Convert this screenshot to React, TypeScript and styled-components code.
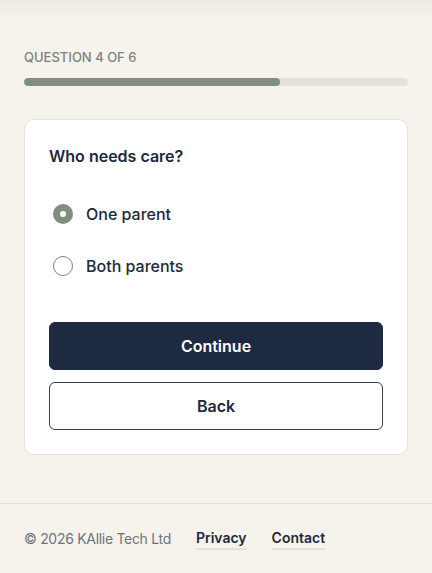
import styled, { createGlobalStyle } from "styled-components";

const GlobalStyle = createGlobalStyle`
  html, body {
    margin: 0;
    padding: 0;
  }

  body {
    background: #f6f3ed;
    font-family: "Inter", "Noto Sans", sans-serif;
    color: #1e293b;
    -webkit-font-smoothing: antialiased;
  }

  * {
    box-sizing: border-box;
  }
`;

const Page = styled.div`
  min-height: 573px;
  background: linear-gradient(to bottom, #eeeae3 0px, #f6f3ed 24px, #f6f3ed 100%);

  display: flex;
  flex-direction: column;
`;

const Main = styled.main`
  padding: 49px 24px 48px;

  display: flex;
  flex-direction: column;
`;

const StepLabel = styled.div`
  margin: 0;

  color: #7b847d;
  font-size: 13px;
  line-height: 16px;
  font-weight: 500;
  letter-spacing: 0;
  text-transform: uppercase;
`;

const Track = styled.div`
  margin-top: 13px;

  height: 8px;
  border-radius: 4px;
  background-color: #e5e2db;

  overflow: hidden;
`;

const Fill = styled.div`
  height: 100%;
  border-radius: 4px;
  background-color: #7f8e80;
`;

const Card = styled.section`
  margin-top: 33px;

  background-color: #ffffff;
  border: 1px solid #e8e4dc;
  border-radius: 10px;

  padding: 24px;

  display: flex;
  flex-direction: column;
`;

const Question = styled.h2`
  margin: 0;

  font-size: 16px;
  line-height: 24px;
  font-weight: 600;
  color: #1e293b;
`;

const Options = styled.div`
  margin-top: 22px;

  display: flex;
  flex-direction: column;
  gap: 4px;
`;

const Option = styled.label`
  height: 48px;

  display: flex;
  align-items: center;
  gap: 13px;

  padding-left: 4px;

  cursor: pointer;
`;

const Radio = styled.span<{ checked: boolean }>`
  width: 20px;
  height: 20px;
  border-radius: 50%;

  flex-shrink: 0;

  display: flex;
  justify-content: center;
  align-items: center;

  background-color: ${props => props.checked ? '#7f8e80' : '#ffffff'};
  border: ${props => props.checked ? 'none' : '1.5px solid #808080'};

  &::after {
    content: "";
    display: ${props => props.checked ? 'block' : 'none'};
    width: 6px;
    height: 6px;
    border-radius: 50%;
    background-color: #ffffff;
  }
`;

const OptionText = styled.span`
  font-size: 16px;
  line-height: 24px;
  font-weight: 500;
  color: #1e293b;
`;

const Actions = styled.div`
  margin-top: 32px;

  display: flex;
  flex-direction: column;
  gap: 12px;
`;

const Button = styled.button<{ primary?: boolean }>`
  height: 48px;
  width: 100%;

  border-radius: 6px;
  border: 1px solid ${props => props.primary ? '#1e2a40' : '#333d4d'};
  background-color: ${props => props.primary ? '#1e2a40' : '#ffffff'};
  color: ${props => props.primary ? '#ffffff' : '#1e293b'};

  font-family: inherit;
  font-size: 16px;
  font-weight: 600;

  cursor: pointer;
`;

const Footer = styled.footer`
  border-top: 1px solid #e5e1d8;

  padding: 24px 24px 24px;

  display: flex;
  align-items: center;
  gap: 25px;
`;

const Copyright = styled.span`
  font-size: 14px;
  line-height: 20px;
  letter-spacing: -0.3px;
  color: #6e737a;
`;

const FooterLink = styled.a`
  font-size: 14px;
  line-height: 20px;
  font-weight: 600;
  color: #1e293b;
  text-decoration: none;

  border-bottom: 2px solid #e3e1dc;
`;

const options = ["One parent", "Both parents"];

const App = (): JSX.Element => {
  const current = 4;
  const total = 6;
  const selected = "One parent";

  return (
    <>
      <GlobalStyle />
      <Page>
        <Main>
          <StepLabel>Question {current} of {total}</StepLabel>
          <Track>
            <Fill style={{ width: `${(current / total) * 100}%` }} />
          </Track>
          <Card>
            <Question>Who needs care?</Question>
            <Options>
              {options.map(option => (
                <Option key={option}>
                  <Radio checked={option === selected} />
                  <OptionText>{option}</OptionText>
                </Option>
              ))}
            </Options>
            <Actions>
              <Button primary>Continue</Button>
              <Button>Back</Button>
            </Actions>
          </Card>
        </Main>
        <Footer>
          <Copyright>© 2026 KAllie Tech Ltd</Copyright>
          <FooterLink href="#">Privacy</FooterLink>
          <FooterLink href="#">Contact</FooterLink>
        </Footer>
      </Page>
    </>
  );
};

export default App;
